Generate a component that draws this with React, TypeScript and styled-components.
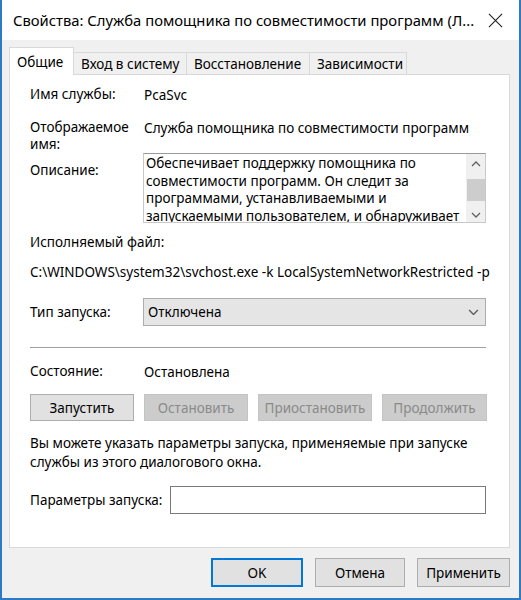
import React, { FunctionComponent, ReactElement } from 'react'
import styled, { createGlobalStyle } from 'styled-components'

const GlobalStyle = createGlobalStyle`
  html, body {
    margin: 0;
    padding: 0;
    background: #ffffff;
  }

  * {
    box-sizing: border-box;
  }
`

const Window = styled.div`
  background-color: #f0f0f0;
  border: 2px solid #2c7bc4;
  border-top: none;
  color: #000;
  display: flex;
  flex-direction: column;
  font-family: 'Noto Sans', 'Liberation Sans', sans-serif;
  font-size: 13.5px;
  height: 600px;
  width: 521px;
`

const TitleBar = styled.div`
  align-items: center;
  background-color: #fff;
  display: flex;
  flex: 0 0 40px;
  justify-content: space-between;
  padding: 0 16px 0 11px;
`

const Title = styled.span`
  font-size: 14.8px;
  white-space: nowrap;
`

const Body = styled.div`
  display: flex;
  flex: 1;
  flex-direction: column;
  padding: 8px 9px 0 7px;
`

const TabRow = styled.div`
  align-items: flex-end;
  display: flex;
  height: 27px;
  position: relative;
  z-index: 1;
`

const Tab = styled.div<{ $active?: boolean; $w: number }>`
  align-items: center;
  background-color: ${({ $active }) => ($active ? '#fff' : '#f0f0f0')};
  border: 1px solid #d9d9d9;
  border-bottom: ${({ $active }) => ($active ? 'none' : '1px solid #d9d9d9')};
  display: flex;
  height: ${({ $active }) => ($active ? '28px' : '23px')};
  margin-left: ${({ $active }) => ($active ? '0' : '-1px')};
  padding: ${({ $active }) => ($active ? '0 8px 0 7px' : '0 7px')};
  white-space: nowrap;
  width: ${({ $w }) => $w}px;
`

const Panel = styled.div`
  background-color: #fff;
  border: 1px solid #d9d9d9;
  display: flex;
  flex-direction: column;
  height: 474px;
  margin-top: -1px;
  padding: 11px 23px 0 20px;
`

const FieldRow = styled.div<{ $mt?: number }>`
  align-items: start;
  display: grid;
  grid-template-columns: 113px 1fr;
  line-height: 18px;
  margin-top: ${({ $mt }) => $mt ?? 0}px;
`

const CenterRow = styled(FieldRow)`
  align-items: center;
`

const Label = styled.span<{ $pt?: number }>`
  line-height: 17px;
  padding-top: ${({ $pt }) => $pt ?? 0}px;
`

const Value = styled.span`
  padding-left: 1px;
  white-space: nowrap;
`

const TextBlock = styled.div<{ $mt?: number }>`
  line-height: 19px;
  margin-top: ${({ $mt }) => $mt ?? 0}px;
  white-space: nowrap;
`

const Description = styled.div`
  border: 1px solid #c9c9c9;
  border-top-color: #9a9a9a;
  display: flex;
  height: 70px;
  overflow: hidden;
`

const DescriptionText = styled.div`
  flex: 1;
  line-height: 17.5px;
  padding: 1px 0 0 2px;
  white-space: nowrap;
`

const ScrollBar = styled.div`
  align-items: center;
  background-color: #f0f0f0;
  display: flex;
  flex: 0 0 19px;
  flex-direction: column;
  justify-content: space-between;
  padding: 7px 0 4px;
`

const ScrollThumb = styled.div`
  background-color: #cdcdcd;
  height: 22px;
  width: 18px;
`

const Select = styled.div`
  align-items: center;
  background-color: #e5e5e5;
  border: 1px solid #acacac;
  display: flex;
  height: 28px;
  justify-content: space-between;
  padding: 0 6px 0 4px;
`

const Divider = styled.div`
  border-top: 1px solid #a0a0a0;
  border-bottom: 1px solid #fff;
  margin-top: 21px;
`

const ButtonRow = styled.div`
  display: grid;
  gap: 10px;
  grid-template-columns: 104px 104px 114px 105px;
  justify-content: space-between;
  margin-top: 13px;
`

const Button = styled.div<{ $disabled?: boolean; $default?: boolean; $w?: number }>`
  align-items: center;
  background-color: ${({ $disabled }) => ($disabled ? '#cccccc' : '#e1e1e1')};
  border: ${({ $default }) => ($default ? '2px solid #0078d7' : '1px solid #adadad')};
  border-color: ${({ $disabled, $default }) => ($default ? '#0078d7' : $disabled ? '#c4c4c4' : '#adadad')};
  color: ${({ $disabled }) => ($disabled ? '#8a8a8a' : '#000')};
  display: flex;
  height: 27px;
  justify-content: center;
  white-space: nowrap;
  width: ${({ $w }) => ($w ? `${$w}px` : 'auto')};
`

const Input = styled.div`
  background-color: #fff;
  border: 1px solid #7a7a7a;
  height: 28px;
`

const ParamsRow = styled.div`
  align-items: center;
  display: grid;
  gap: 8px;
  grid-template-columns: auto 1fr;
  margin-top: 14px;
`

const Footer = styled.div`
  display: flex;
  gap: 12px;
  justify-content: flex-end;
  margin-top: 10px;
`

const FooterButton = styled(Button)`
  height: 29px;
`

const Chevron: FunctionComponent<{ up?: boolean; size?: number }> = ({ up, size = 10 }): ReactElement => (
  <svg width={size} height={size * 0.6} viewBox="0 0 10 6">
    <polyline
      points={up ? '1,5 5,1 9,5' : '1,1 5,5 9,1'}
      fill="none"
      stroke="#606060"
      strokeWidth="1.3"
    />
  </svg>
)

const CloseIcon = (): ReactElement => (
  <svg width="15" height="15" viewBox="0 0 16 16">
    <path d="M1 1 L15 15 M15 1 L1 15" stroke="#222" strokeWidth="1.2" fill="none" />
  </svg>
)

const App: FunctionComponent = (): ReactElement => (
  <>
    <GlobalStyle />
    <Window>
      <TitleBar>
        <Title>Свойства: Служба помощника по совместимости программ (Л...</Title>
        <CloseIcon />
      </TitleBar>

      <Body>
        <TabRow>
          <Tab $active $w={65}>Общие</Tab>
          <Tab $w={114}>Вход в систему</Tab>
          <Tab $w={124}>Восстановление</Tab>
          <Tab $w={98}>Зависимости</Tab>
        </TabRow>

        <Panel>
          <FieldRow>
            <Label>Имя службы:</Label>
            <Value>PcaSvc</Value>
          </FieldRow>

          <FieldRow $mt={15}>
            <Label>
              Отображаемое
              <br />
              имя:
            </Label>
            <Value>Служба помощника по совместимости программ</Value>
          </FieldRow>

          <FieldRow>
            <Label $pt={9}>Описание:</Label>
            <Description>
              <DescriptionText>
                Обеспечивает поддержку помощника по
                <br />
                совместимости программ. Он следит за
                <br />
                программами, устанавливаемыми и
                <br />
                запускаемыми пользователем, и обнаруживает
              </DescriptionText>
              <ScrollBar>
                <Chevron up />
                <ScrollThumb />
                <Chevron />
              </ScrollBar>
            </Description>
          </FieldRow>

          <TextBlock $mt={10}>Исполняемый файл:</TextBlock>
          <TextBlock $mt={11}>C:\WINDOWS\system32\svchost.exe -k LocalSystemNetworkRestricted -p</TextBlock>

          <CenterRow $mt={16}>
            <Label>Тип запуска:</Label>
            <Select>
              <span>Отключена</span>
              <Chevron size={11} />
            </Select>
          </CenterRow>

          <Divider />

          <FieldRow $mt={14}>
            <Label>Состояние:</Label>
            <Value>Остановлена</Value>
          </FieldRow>

          <ButtonRow>
            <Button>Запустить</Button>
            <Button $disabled>Остановить</Button>
            <Button $disabled>Приостановить</Button>
            <Button $disabled>Продолжить</Button>
          </ButtonRow>

          <TextBlock $mt={13}>
            Вы можете указать параметры запуска, применяемые при запуске
            <br />
            службы из этого диалогового окна.
          </TextBlock>

          <ParamsRow>
            <span>Параметры запуска:</span>
            <Input />
          </ParamsRow>
        </Panel>

        <Footer>
          <FooterButton $default $w={92}>OK</FooterButton>
          <FooterButton $w={90}>Отмена</FooterButton>
          <FooterButton $w={93}>Применить</FooterButton>
        </Footer>
      </Body>
    </Window>
  </>
)

export default App
